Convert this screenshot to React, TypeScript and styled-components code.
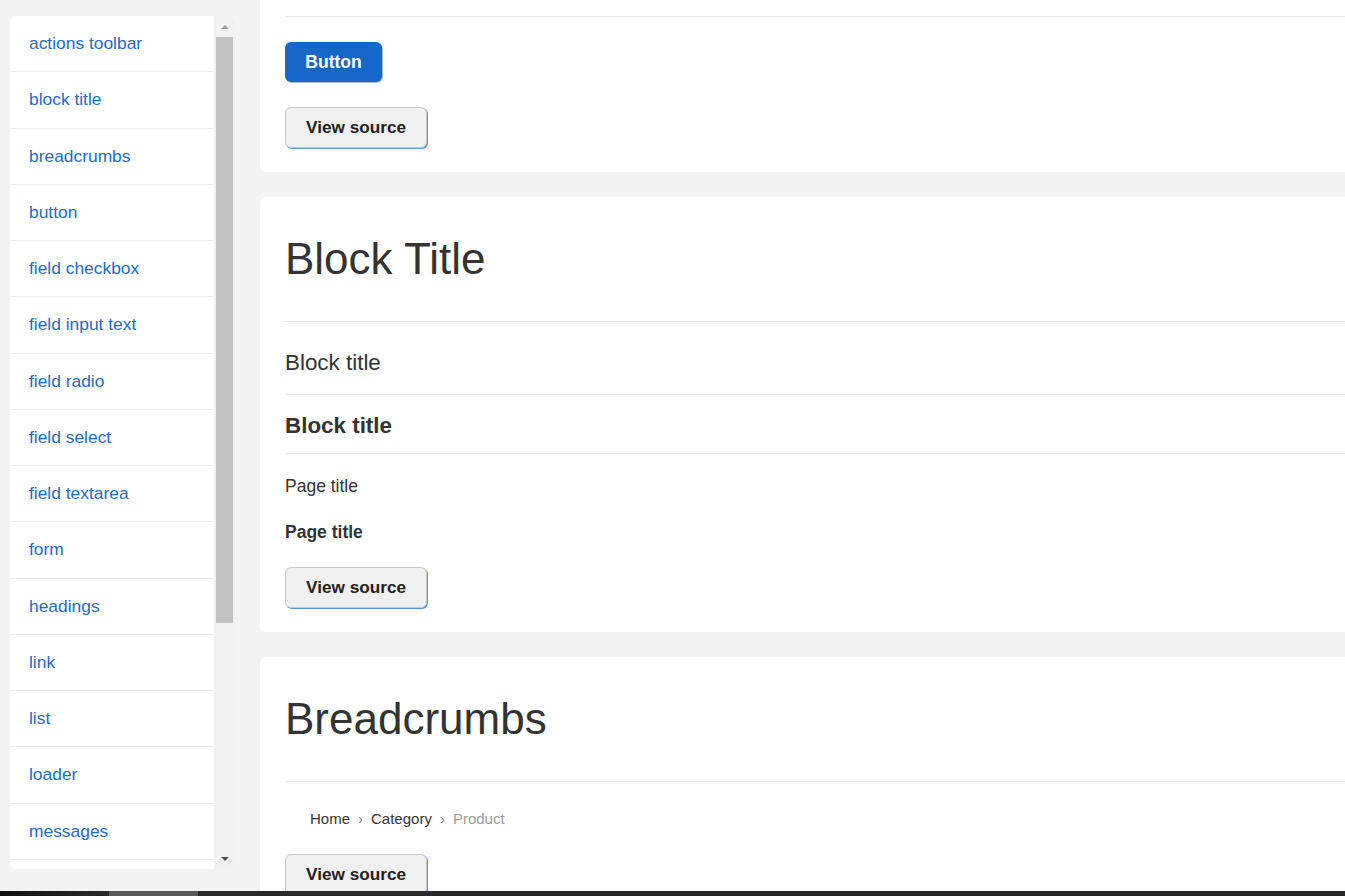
import React from "react";
import styled, { createGlobalStyle } from "styled-components";

const Global = createGlobalStyle`
  html, body { margin: 0; padding: 0; height: 896px; overflow: hidden; background: #f3f3f3; }
  body { font-family: "Liberation Sans", Arial, sans-serif; color: #333; }
  * { box-sizing: border-box; }
`;

const Page = styled.div`
  display: flex;
  align-items: flex-start;
  gap: 25px;
  padding-left: 10px;
  height: 896px;
  overflow: hidden;
`;

const SideCard = styled.aside`
  margin-top: 16px;
  width: 225px;
  height: 853px;
  flex: none;
  display: flex;
  background: #fff;
  border-radius: 6px;
  overflow: hidden;
`;

const NavList = styled.ul`
  list-style: none;
  margin: 0;
  padding: 0;
  width: 204px;
  height: 100%;
  overflow: hidden;
`;

const NavItem = styled.li`
  border-bottom: 1px solid #e8eef2;
  padding: 17px 19px 18px;
  height: 56.25px;
  font-size: 17.4px;
  line-height: 20px;
  color: #1f6bc7;
`;

const Track = styled.div`
  width: 21px;
  height: 100%;
  background: #f1f1f1;
  display: flex;
  flex-direction: column;
  align-items: center;
  padding: 0 2px 0 2px;
`;

const ArrowBox = styled.div`
  height: 21px;
  width: 100%;
  display: flex;
  align-items: center;
  justify-content: center;
`;

const Arrow = styled.div<{ $down?: boolean; $dark?: boolean }>`
  width: 0;
  height: 0;
  border-left: 4px solid transparent;
  border-right: 4px solid transparent;
  ${(p) =>
    p.$down
      ? `border-top: 4px solid ${p.$dark ? "#505050" : "#a3a3a3"};`
      : `border-bottom: 4px solid ${p.$dark ? "#505050" : "#a3a3a3"};`}
`;

const Thumb = styled.div`
  width: 17px;
  height: 586px;
  background: #c1c1c1;
`;

const TrackFill = styled.div`
  flex: 1;
`;

const Main = styled.main`
  flex: 1;
  margin-right: -30px;
  display: flex;
  flex-direction: column;
  gap: 25px;
`;

const Card = styled.section<{ $continued?: boolean }>`
  background: #fff;
  border-radius: ${(p) => (p.$continued ? "0 0 6px 6px" : "6px")};
  padding: ${(p) => (p.$continued ? "16px" : "0")} 0 24px 25px;
`;

const Heading = styled.h2`
  margin: 0;
  padding: 38px 0 38px;
  font-size: 44px;
  line-height: 48px;
  font-weight: 400;
  color: #333;
  border-bottom: 1px solid #e6e9ec;
`;

const Rule = styled.div`
  border-top: 1px solid #e6ecf0;
`;

const TitleRow = styled.div<{ $bold?: boolean }>`
  padding: ${(p) => (p.$bold ? "18px 0 14px" : "28px 0 18px")};
  font-size: 22.4px;
  line-height: 26px;
  font-weight: ${(p) => (p.$bold ? 700 : 400)};
  border-bottom: 1px solid #e6e6e6;
`;

const PageTitle = styled.div<{ $bold?: boolean }>`
  margin-top: ${(p) => (p.$bold ? "26px" : "22px")};
  font-size: 17.5px;
  line-height: 20px;
  font-weight: ${(p) => (p.$bold ? 700 : 400)};
`;

const PrimaryButton = styled.button`
  display: block;
  margin-top: 25px;
  height: 40px;
  width: 97px;
  border: none;
  border-radius: 6px;
  background: #1767c8;
  color: #fff;
  font-family: "Liberation Sans", Arial, sans-serif;
  font-weight: 700;
  font-size: 17.5px;
  box-shadow: 1px 1px 0 rgba(10, 60, 140, 0.35);
`;

const SourceButton = styled.button<{ $gap?: number }>`
  display: block;
  margin-top: ${(p) => p.$gap ?? 25}px;
  height: 41px;
  padding: 0 20px;
  border: 1px solid #c9c9c9;
  border-radius: 6px;
  background: #f0f0f0;
  color: #222;
  font-family: "Liberation Sans", Arial, sans-serif;
  font-weight: 700;
  font-size: 17.2px;
  box-shadow: 1px 1px 0 rgba(40, 110, 210, 0.75);
`;

const Crumbs = styled.nav`
  display: flex;
  align-items: center;
  margin-top: 28px;
  padding-left: 25px;
  font-size: 15px;
  line-height: 18px;
`;

const Crumb = styled.span<{ $current?: boolean }>`
  color: ${(p) => (p.$current ? "#999" : "#333")};
`;

const Sep = styled.span`
  color: #777;
  margin: 0 8px 0 8px;
`;

const BottomBar = styled.div`
  position: fixed;
  left: 0;
  right: 0;
  bottom: 0;
  height: 5px;
  display: flex;
  background: #2a2a2a;
`;

const BarStart = styled.div`
  width: 109px;
  background: linear-gradient(90deg, #111, #2a2a2a);
`;

const BarThumb = styled.div`
  width: 89px;
  background: #585858;
`;

const navItems = [
  "actions toolbar",
  "block title",
  "breadcrumbs",
  "button",
  "field checkbox",
  "field input text",
  "field radio",
  "field select",
  "field textarea",
  "form",
  "headings",
  "link",
  "list",
  "loader",
  "messages",
  "pager",
];

export default function App() {
  return (
    <>
      <Global />
      <Page>
        <SideCard>
          <NavList>
            {navItems.map((n) => (
              <NavItem key={n}>{n}</NavItem>
            ))}
          </NavList>
          <Track>
            <ArrowBox>
              <Arrow />
            </ArrowBox>
            <Thumb />
            <TrackFill />
            <ArrowBox>
              <Arrow $down $dark />
            </ArrowBox>
          </Track>
        </SideCard>
        <Main>
          <Card $continued>
            <Rule />
            <PrimaryButton>Button</PrimaryButton>
            <SourceButton>View source</SourceButton>
          </Card>
          <Card>
            <Heading>Block Title</Heading>
            <TitleRow>Block title</TitleRow>
            <TitleRow $bold>Block title</TitleRow>
            <PageTitle>Page title</PageTitle>
            <PageTitle $bold>Page title</PageTitle>
            <SourceButton $gap={25}>View source</SourceButton>
          </Card>
          <Card>
            <Heading>Breadcrumbs</Heading>
            <Crumbs>
              <Crumb>Home</Crumb>
              <Sep>›</Sep>
              <Crumb>Category</Crumb>
              <Sep>›</Sep>
              <Crumb $current>Product</Crumb>
            </Crumbs>
            <SourceButton $gap={26}>View source</SourceButton>
          </Card>
        </Main>
      </Page>
      <BottomBar>
        <BarStart />
        <BarThumb />
      </BottomBar>
    </>
  );
}
